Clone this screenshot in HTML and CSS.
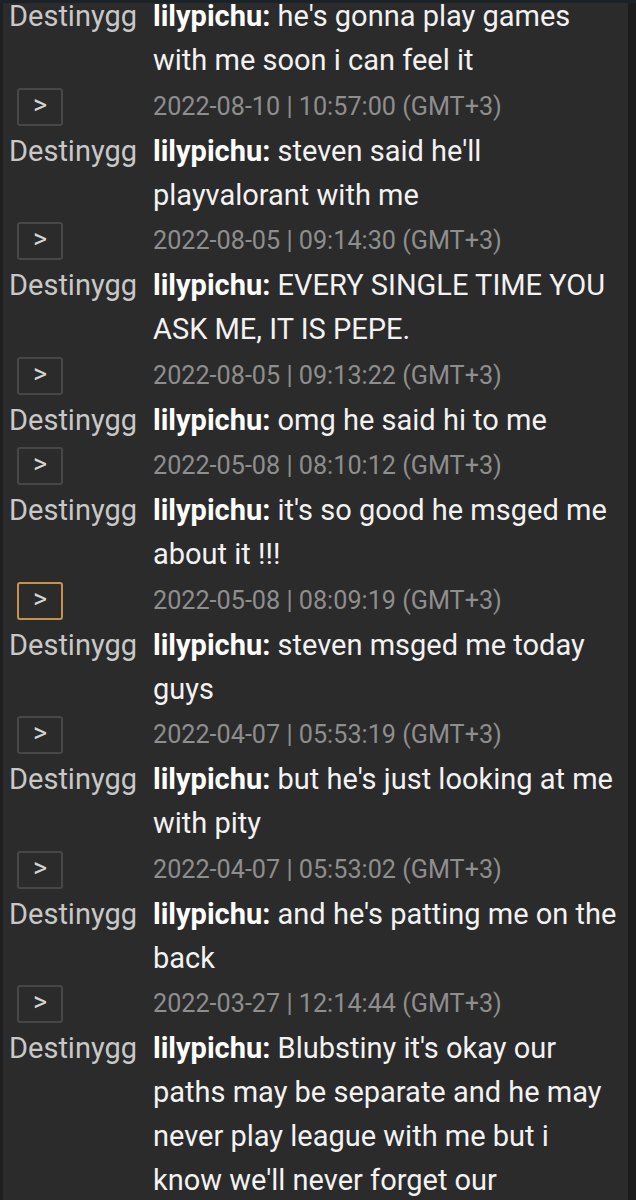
FILE: index.html
```html
<!DOCTYPE html>
<html>
<head>
<meta charset="utf-8">
<link rel="stylesheet" href="styles.css">
</head>
<body>
<div class="topbar"></div>
<div class="frame">
  <div class="panel">
    <div class="log">
      <div class="entry">
        <div class="chan">Destinygg</div>
        <div class="msg"><b>lilypichu:</b> he's gonna play games with me soon i can feel it</div>
      </div>
      <div class="entry">
        <div class="meta"><span class="btn">&gt;</span></div>
        <div class="ts">2022-08-10 | 10:57:00 (GMT+3)</div>
        <div class="chan">Destinygg</div>
        <div class="msg"><b>lilypichu:</b> steven said he'll playvalorant with me</div>
      </div>
      <div class="entry">
        <div class="meta"><span class="btn">&gt;</span></div>
        <div class="ts">2022-08-05 | 09:14:30 (GMT+3)</div>
        <div class="chan">Destinygg</div>
        <div class="msg"><b>lilypichu:</b> EVERY SINGLE TIME YOU ASK ME, IT IS PEPE.</div>
      </div>
      <div class="entry">
        <div class="meta"><span class="btn">&gt;</span></div>
        <div class="ts">2022-08-05 | 09:13:22 (GMT+3)</div>
        <div class="chan">Destinygg</div>
        <div class="msg"><b>lilypichu:</b> omg he said hi to me</div>
      </div>
      <div class="entry">
        <div class="meta"><span class="btn">&gt;</span></div>
        <div class="ts">2022-05-08 | 08:10:12 (GMT+3)</div>
        <div class="chan">Destinygg</div>
        <div class="msg"><b>lilypichu:</b> it's so good he msged me about it !!!</div>
      </div>
      <div class="entry">
        <div class="meta"><span class="btn active">&gt;</span></div>
        <div class="ts">2022-05-08 | 08:09:19 (GMT+3)</div>
        <div class="chan">Destinygg</div>
        <div class="msg"><b>lilypichu:</b> steven msged me today guys</div>
      </div>
      <div class="entry">
        <div class="meta"><span class="btn">&gt;</span></div>
        <div class="ts">2022-04-07 | 05:53:19 (GMT+3)</div>
        <div class="chan">Destinygg</div>
        <div class="msg"><b>lilypichu:</b> but he's just looking at me with pity</div>
      </div>
      <div class="entry">
        <div class="meta"><span class="btn">&gt;</span></div>
        <div class="ts">2022-04-07 | 05:53:02 (GMT+3)</div>
        <div class="chan">Destinygg</div>
        <div class="msg"><b>lilypichu:</b> and he's patting me on the back</div>
      </div>
      <div class="entry">
        <div class="meta"><span class="btn">&gt;</span></div>
        <div class="ts">2022-03-27 | 12:14:44 (GMT+3)</div>
        <div class="chan">Destinygg</div>
        <div class="msg"><b>lilypichu:</b> Blubstiny it's okay our paths may be separate and he may never play league with me but i know we'll never forget our memories together</div>
      </div>
    </div>
  </div>
  <div class="rail"></div>
</div>
</body>
</html>
```

FILE: styles.css
```css
html, body {
  margin: 0;
  padding: 0;
  background: #1b1b1b;
  height: 1200px;
  overflow: hidden;
}
body {
  font-family: Roboto, "Noto Sans", sans-serif;
}
.topbar {
  height: 3px;
  background: #1a2228;
  position: relative;
  z-index: 2;
}
.frame {
  display: flex;
  height: 1197px;
  overflow: hidden;
}
.panel {
  flex: 1;
  background: #2b2b2b;
  border-left: 3px solid #1f1f1f;
  padding-left: 6px;
  padding-right: 8px;
  overflow: hidden;
}
.rail {
  width: 8px;
  background: #1b1b1b;
}
.log {
  margin-top: -9px;
}
.entry {
  display: grid;
  grid-template-columns: 144px 1fr;
}
.meta {
  padding-top: 2.5px;
  height: 44px;
  display: flex;
  align-items: center;
}
.btn {
  box-sizing: border-box;
  width: 46px;
  height: 38px;
  margin-left: 8px;
  border: 2px solid #474747;
  border-radius: 3px;
  display: flex;
  align-items: center;
  justify-content: center;
  color: #d4d4d4;
  font-size: 27px;
  line-height: 1;
  padding-bottom: 3px;
}
.btn.active {
  border-color: #c8914a;
}
.ts {
  padding-top: 2.5px;
  line-height: 44px;
  font-size: 25.2px;
  color: #8e8e8e;
  white-space: nowrap;
}
.chan {
  font-size: 29px;
  line-height: 44px;
  color: #c8c8c8;
}
.msg {
  font-size: 29px;
  line-height: 44px;
  color: #f2f2f2;
}
.msg b {
  color: #ffffff;
  font-weight: 700;
}
```
